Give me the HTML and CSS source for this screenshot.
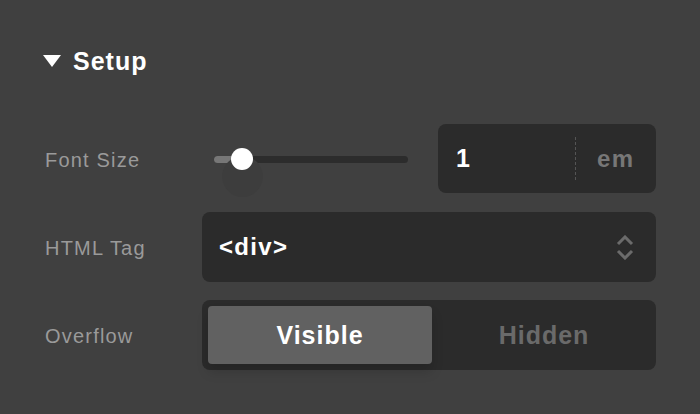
FILE: index.html
```html
<!DOCTYPE html>
<html lang="en">
<head>
    <meta charset="UTF-8">
    <meta name="viewport" content="width=device-width, initial-scale=1.0">
    <title>Setup</title>
    <link rel="stylesheet" href="styles.css">
</head>
<body>
    <div class="panel">
        <div class="section-head">
            <span class="caret"></span>
            <h2>Setup</h2>
        </div>

        <div class="rows">
            <label class="row-label">Font Size</label>
            <div class="size-control">
                <div class="slider">
                    <div class="track">
                        <div class="fill"></div>
                        <div class="thumb-shadow"></div>
                        <div class="thumb"></div>
                    </div>
                </div>
                <div class="num-box">
                    <span class="num-value">1</span>
                    <span class="unit">em</span>
                </div>
            </div>

            <label class="row-label">HTML Tag</label>
            <div class="select-box">
                <span class="select-value">&lt;div&gt;</span>
                <svg class="chevrons" width="20" height="25" viewBox="0 0 20 25">
                    <path d="M3 9 L10 2 L17 9" fill="none" stroke="#6b6b6b" stroke-width="3"/>
                    <path d="M3 16 L10 23 L17 16" fill="none" stroke="#6b6b6b" stroke-width="3"/>
                </svg>
            </div>

            <label class="row-label">Overflow</label>
            <div class="segmented">
                <button class="seg active">Visible</button>
                <button class="seg">Hidden</button>
            </div>
        </div>
    </div>
</body>
</html>
```

FILE: styles.css
```css
body {
    margin: 0;
    background: #404040;
    font-family: "Liberation Sans", Arial, sans-serif;
    height: 414px;
    overflow: hidden;
}
.panel {
    padding: 46px 44px 0 43px;
}
.section-head {
    display: flex;
    align-items: center;
    height: 30px;
}
.caret {
    width: 0;
    height: 0;
    border-left: 9px solid transparent;
    border-right: 9px solid transparent;
    border-top: 12px solid #fff;
    margin-right: 12px;
}
.section-head h2 {
    margin: 0;
    color: #fff;
    font-size: 25px;
    line-height: 30px;
    font-weight: bold;
    letter-spacing: 1px;
}
.rows {
    display: grid;
    grid-template-columns: 159px 1fr;
    grid-auto-rows: 70px;
    row-gap: 18px;
    margin-top: 48px;
}
.row-label {
    display: flex;
    align-items: center;
    padding: 2px 0 0 2px;
    color: #9a9a9a;
    font-size: 20px;
    letter-spacing: 1.2px;
}
.size-control {
    display: flex;
    align-items: center;
}
.slider {
    width: 236px;
    flex: none;
}
.track {
    position: relative;
    margin-left: 12px;
    width: 194px;
    height: 7px;
    border-radius: 4px;
    background: #2c2c2c;
}
.fill {
    width: 28px;
    height: 7px;
    border-radius: 4px 0 0 4px;
    background: #777;
}
.thumb {
    position: absolute;
    left: 17px;
    top: -8px;
    width: 22px;
    height: 22px;
    border-radius: 50%;
    background: #fff;
}
.thumb-shadow {
    position: absolute;
    left: 8px;
    top: 0;
    width: 41px;
    height: 41px;
    border-radius: 50%;
    background: #3d3d3d;
}
.num-box {
    flex: 1;
    height: 69px;
    align-self: flex-start;
    display: flex;
    align-items: center;
    background: #2b2b2b;
    border-radius: 8px;
}
.num-value {
    flex: 1;
    padding-left: 18px;
    color: #fff;
    font-size: 25px;
    font-weight: bold;
    border-right: 1px dashed #555;
    line-height: 43px;
}
.unit {
    width: 80px;
    flex: none;
    padding-left: 21px;
    box-sizing: border-box;
    color: #777;
    font-size: 24px;
    font-weight: bold;
    letter-spacing: 1.5px;
}
.select-box {
    display: flex;
    align-items: center;
    justify-content: space-between;
    padding: 0 21px 0 17px;
    background: #2b2b2b;
    border-radius: 8px;
}
.select-value {
    color: #fff;
    font-size: 24px;
    font-weight: bold;
    letter-spacing: 1.3px;
}
.segmented {
    display: grid;
    grid-template-columns: 1fr 1fr;
    padding: 6px 0 6px 6px;
    background: #2b2b2b;
    border-radius: 8px;
}
.seg {
    border: none;
    background: transparent;
    font-family: inherit;
    font-size: 25px;
    font-weight: bold;
    letter-spacing: 1px;
    color: #6a6a6a;
    border-radius: 4px;
    padding: 0;
}
.seg.active {
    background: #616161;
    color: #fff;
    box-shadow: 0 8px 12px rgba(0, 0, 0, 0.15);
}
```
